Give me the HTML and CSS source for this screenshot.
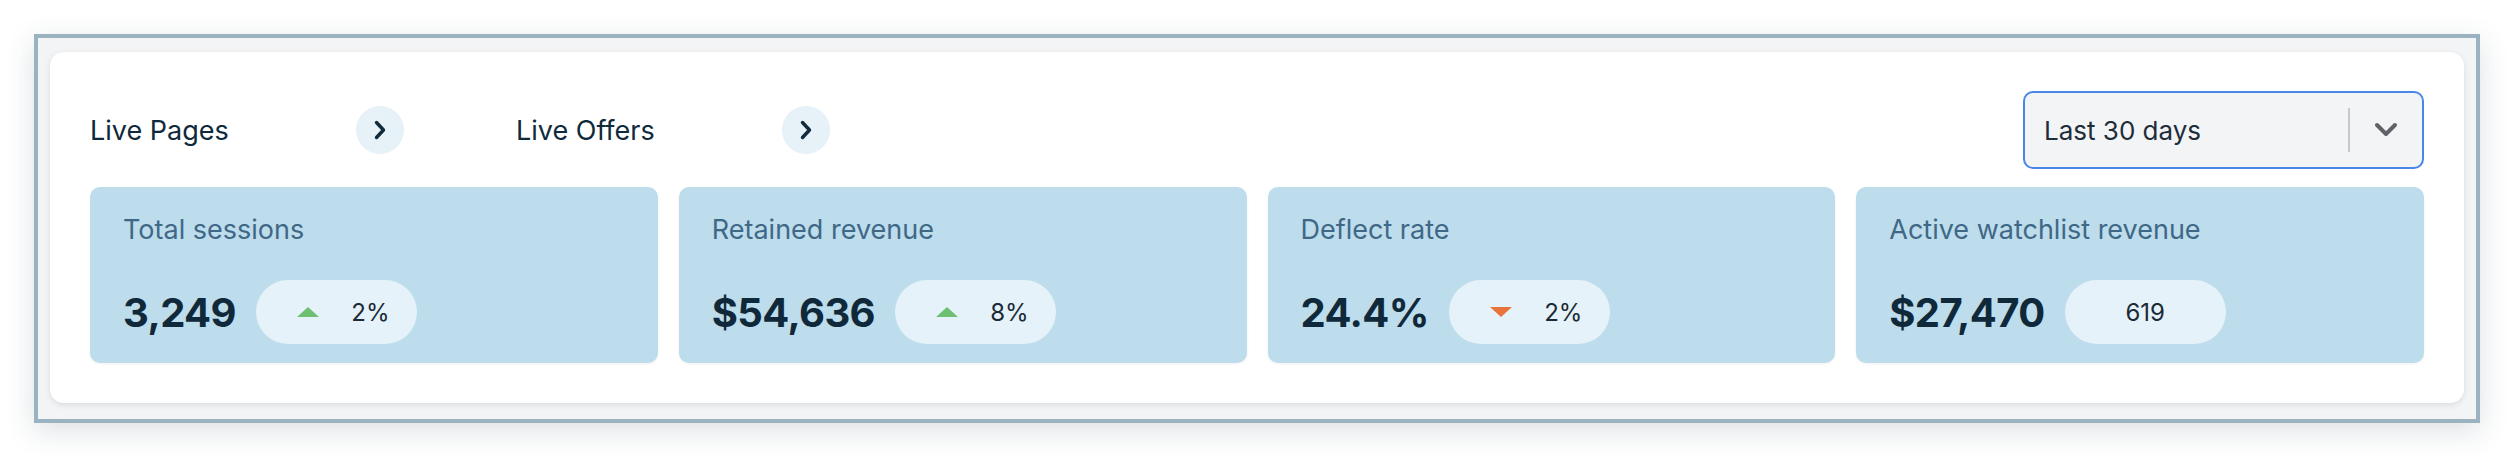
FILE: index.html
```html
<!DOCTYPE html>
<html lang="en">
<head>
<meta charset="utf-8">
<title>Dashboard summary</title>
<link rel="stylesheet" href="styles.css">
</head>
<body>
<div class="page">
  <div class="frame">
    <section class="panel">
      <header class="header">
        <nav class="tabs">
          <a class="tab" href="#">
            <span class="tab-label">Live Pages</span>
            <span class="circle">
              <svg width="14" height="20" viewBox="0 0 14 20"><path d="M3.5 2.5 L10.5 10 L3.5 17.5" fill="none" stroke="#112b3c" stroke-width="3.4" stroke-linecap="round" stroke-linejoin="round"/></svg>
            </span>
          </a>
          <a class="tab" href="#">
            <span class="tab-label">Live Offers</span>
            <span class="circle">
              <svg width="14" height="20" viewBox="0 0 14 20"><path d="M3.5 2.5 L10.5 10 L3.5 17.5" fill="none" stroke="#112b3c" stroke-width="3.4" stroke-linecap="round" stroke-linejoin="round"/></svg>
            </span>
          </a>
        </nav>
        <div class="select">
          <span class="select-text">Last 30 days</span>
          <span class="select-divider"></span>
          <span class="select-arrow">
            <svg width="24" height="16" viewBox="0 0 24 16"><path d="M3 3 L12 12 L21 3" fill="none" stroke="#5f6266" stroke-width="4" stroke-linecap="round" stroke-linejoin="round"/></svg>
          </span>
        </div>
      </header>
      <div class="stats">
        <div class="stat">
          <div class="stat-label">Total sessions</div>
          <div class="stat-row">
            <span class="stat-value">3,249</span>
            <span class="pill"><span class="tri tri-up"></span><span class="pill-text">2%</span></span>
          </div>
        </div>
        <div class="stat">
          <div class="stat-label">Retained revenue</div>
          <div class="stat-row">
            <span class="stat-value">$54,636</span>
            <span class="pill"><span class="tri tri-up"></span><span class="pill-text">8%</span></span>
          </div>
        </div>
        <div class="stat">
          <div class="stat-label">Deflect rate</div>
          <div class="stat-row">
            <span class="stat-value">24.4%</span>
            <span class="pill"><span class="tri tri-down"></span><span class="pill-text">2%</span></span>
          </div>
        </div>
        <div class="stat">
          <div class="stat-label">Active watchlist revenue</div>
          <div class="stat-row">
            <span class="stat-value">$27,470</span>
            <span class="pill"><span class="pill-text">619</span></span>
          </div>
        </div>
      </div>
    </section>
  </div>
</div>
</body>
</html>
```
FILE: styles.css
```css
* { box-sizing: border-box; }
html, body { margin: 0; padding: 0; background: #ffffff; }
body { font-family: Inter, "Noto Sans", sans-serif; color: #10293a; }

.page { padding: 34px; }

.frame {
  border: 4px solid #9bb3c1;
  background: #f2f4f6;
  padding: 14px 12px 16px 12px;
  box-shadow: 0 8px 28px rgba(40, 60, 80, 0.16);
}

.panel {
  background: #ffffff;
  border-radius: 14px;
  padding: 39px 40px 40px 40px;
  box-shadow: 0 2px 6px rgba(0, 0, 0, 0.10);
}

.header {
  display: flex;
  justify-content: space-between;
  align-items: center;
  height: 78px;
  margin-bottom: 18px;
}

.tabs { display: flex; gap: 112px; align-items: center; }

.tab {
  display: flex;
  align-items: center;
  justify-content: space-between;
  width: 314px;
  text-decoration: none;
  color: #0f2a3c;
  font-size: 27px;
}

.circle {
  width: 48px;
  height: 48px;
  border-radius: 50%;
  background: #e6f1f8;
  display: flex;
  align-items: center;
  justify-content: center;
}

.select {
  width: 401px;
  height: 78px;
  border: 2px solid #4a86e8;
  border-radius: 10px;
  background: #f2f4f6;
  display: flex;
  align-items: center;
  padding-left: 19px;
}
.select-text { flex: 1; font-size: 26px; color: #1f2d3a; }
.select-divider { width: 2px; height: 44px; background: #c9c9c9; }
.select-arrow {
  width: 72px;
  display: flex;
  justify-content: center;
  align-items: center;
}

.stats {
  display: grid;
  grid-template-columns: repeat(4, 1fr);
  gap: 21px;
}

.stat {
  height: 176px;
  background: #bddcec;
  border-radius: 10px;
  padding: 26px 33px 19px 33px;
  display: flex;
  flex-direction: column;
  justify-content: space-between;
  box-shadow: 0 1px 3px rgba(0, 0, 0, 0.06);
}

.stat-label { font-size: 27px; color: #3f6887; }

.stat-row { display: flex; align-items: center; gap: 20px; }

.stat-value { font-size: 40px; font-weight: 700; color: #10293a; letter-spacing: -0.6px; }

.pill {
  min-width: 161px;
  height: 64px;
  border-radius: 32px;
  background: #e6f2f9;
  display: flex;
  align-items: center;
  justify-content: center;
}
.pill-text { font-size: 24px; color: #1a2a37; }

.tri { width: 0; height: 0; margin-left: 14px; margin-right: 32px; }
.tri-up {
  border-left: 11px solid transparent;
  border-right: 11px solid transparent;
  border-bottom: 10px solid #6cc070;
}
.tri-down {
  border-left: 11px solid transparent;
  border-right: 11px solid transparent;
  border-top: 10px solid #e8743b;
}
```
